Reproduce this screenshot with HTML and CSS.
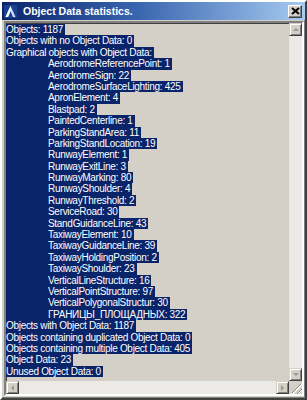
FILE: index.html
```html
<!DOCTYPE html>
<html lang="en">
<head>
  <meta charset="UTF-8" />
  <meta name="viewport" content="width=device-width, initial-scale=1.0" />
  <title>Object Data statistics.</title>
  <link rel="stylesheet" href="styles.css">
</head>
<body>
  <div class="window">
    <div class="titlebar">
      <svg class="app-icon" width="13" height="13" viewBox="0 0 13 13">
        <rect width="13" height="13" fill="#1d3f8f" />
        <path d="M6.5 1 L11.5 12 L9 12 L6.5 6 L4 12 L1.5 12 Z" fill="#cfe3ff" />
        <path d="M6.5 1 L6.5 6 L4 12 L1.5 12 Z" fill="#ffffff" />
      </svg>
      <span class="title">Object Data statistics.</span>
      <div class="close-btn">
        <svg width="9" height="8" viewBox="0 0 9 8">
          <path d="M1 1 L8 7 M8 1 L1 7" stroke="#000" stroke-width="2" />
        </svg>
      </div>
    </div>

    <div class="body">
      <div class="listbox">
        <div class="content">
          <div class="line">Objects: 1187</div>
          <div class="line">Objects with no Object Data: 0</div>
          <div class="line">Graphical objects with Object Data:</div>
          <div class="line sub">AerodromeReferencePoint: 1</div>
          <div class="line sub">AerodromeSign: 22</div>
          <div class="line sub">AerodromeSurfaceLighting: 425</div>
          <div class="line sub">ApronElement: 4</div>
          <div class="line sub">Blastpad: 2</div>
          <div class="line sub">PaintedCenterline: 1</div>
          <div class="line sub">ParkingStandArea: 11</div>
          <div class="line sub">ParkingStandLocation: 19</div>
          <div class="line sub">RunwayElement: 1</div>
          <div class="line sub">RunwayExitLine: 3</div>
          <div class="line sub">RunwayMarking: 80</div>
          <div class="line sub">RunwayShoulder: 4</div>
          <div class="line sub">RunwayThreshold: 2</div>
          <div class="line sub">ServiceRoad: 30</div>
          <div class="line sub">StandGuidanceLine: 43</div>
          <div class="line sub">TaxiwayElement: 10</div>
          <div class="line sub">TaxiwayGuidanceLine: 39</div>
          <div class="line sub">TaxiwayHoldingPosition: 2</div>
          <div class="line sub">TaxiwayShoulder: 23</div>
          <div class="line sub">VerticalLineStructure: 16</div>
          <div class="line sub">VerticalPointStructure: 97</div>
          <div class="line sub">VerticalPolygonalStructur: 30</div>
          <div class="line sub">ГРАНИЦЫ_ПЛОЩАДНЫХ: 322</div>
          <div class="line">Objects with Object Data: 1187</div>
          <div class="line">Objects containing duplicated Object Data: 0</div>
          <div class="line">Objects containing multiple Object Data: 405</div>
          <div class="line">Object Data: 23</div>
          <div class="line">Unused Object Data: 0</div>
        </div>

        <div class="vscroll">
          <div class="sbtn"><span class="arrow up"></span></div>
          <div class="track"></div>
          <div class="sbtn"><span class="arrow down"></span></div>
        </div>

        <div class="hscroll">
          <div class="sbtn"><span class="arrow left"></span></div>
          <div class="track"></div>
          <div class="sbtn"><span class="arrow right"></span></div>
        </div>

        <div class="grip"></div>
      </div>
    </div>
  </div>
</body>
</html>
```

FILE: styles.css
```css
* {
  margin: 0;
  padding: 0;
  box-sizing: border-box;
}
html, body {
  width: 307px;
  height: 400px;
  overflow: hidden;
}
body {
  background: #d4d0c8;
  font-family: 'Liberation Sans', Arial, sans-serif;
}
.window {
  width: 307px;
  height: 400px;
  display: grid;
  grid-template-rows: 18px minmax(0, 1fr);
  background: #d4d0c8;
  border-style: solid;
  border-width: 2px;
  border-color: #ffffff #404040 #404040 #ffffff;
  box-shadow: inset -1px -1px 0 #808080;
}
.titlebar {
  display: flex;
  align-items: center;
  padding: 0 3px 0 2px;
  background: linear-gradient(90deg, #0a246a 0%, #3a66b0 45%, #a6caf0 100%);
}
.app-icon {
  flex: none;
}
.title {
  flex: 1;
  margin-left: 6px;
  color: #fff;
  font-weight: bold;
  font-size: 10.5px;
}
.close-btn {
  width: 14px;
  height: 13px;
  display: flex;
  align-items: center;
  justify-content: center;
  background: #d4d0c8;
  border-style: solid;
  border-width: 1px;
  border-color: #fff #404040 #404040 #fff;
  box-shadow: inset -1px -1px 0 #808080;
}
.body {
  min-height: 0;
  display: grid;
  padding: 1px 1px 2px 2px;
}
.listbox {
  min-height: 0;
  display: grid;
  grid-template-columns: minmax(0, 1fr) 13px;
  grid-template-rows: minmax(0, 1fr) 13px;
  border-style: solid;
  border-width: 2px;
  border-color: #808080 #ffffff #ffffff #808080;
  box-shadow: inset 1px 1px 0 #404040;
  background: #d4d0c8;
}
.content {
  min-height: 0;
  padding-top: 1px;
  overflow: hidden;
  font-size: 10px;
  line-height: 11.4px;
  letter-spacing: -0.3px;
}
.line {
  width: max-content;
  height: 11.4px;
  white-space: nowrap;
  padding-right: 2px;
  background: #0a246a;
  color: #fff;
}
.line.sub {
  padding-left: 42px;
}
.vscroll, .hscroll {
  display: flex;
  background: #eceae6;
}
.vscroll {
  flex-direction: column;
}
.track {
  flex: 1;
}
.sbtn {
  flex: none;
  width: 13px;
  height: 13px;
  display: flex;
  align-items: center;
  justify-content: center;
  background: #d4d0c8;
  border-style: solid;
  border-width: 1px;
  border-color: #d4d0c8 #404040 #404040 #d4d0c8;
  box-shadow: inset 1px 1px 0 #fff, inset -1px -1px 0 #808080;
}
.arrow {
  width: 0;
  height: 0;
  border: 3px solid transparent;
}
.arrow.up {
  border-bottom-color: #9a9892;
  margin-top: -3px;
}
.arrow.down {
  border-top-color: #9a9892;
  margin-top: 3px;
}
.arrow.left {
  border-right-color: #9a9892;
  margin-left: -3px;
}
.arrow.right {
  border-left-color: #9a9892;
  margin-left: 3px;
}
.grip {
  background:
    repeating-linear-gradient(135deg, transparent 0 2px, #808080 2px 3px, #fff 3px 4px) no-repeat right bottom / 10px 10px,
    #d4d0c8;
  clip-path: polygon(100% 0, 100% 100%, 0 100%);
}
```
